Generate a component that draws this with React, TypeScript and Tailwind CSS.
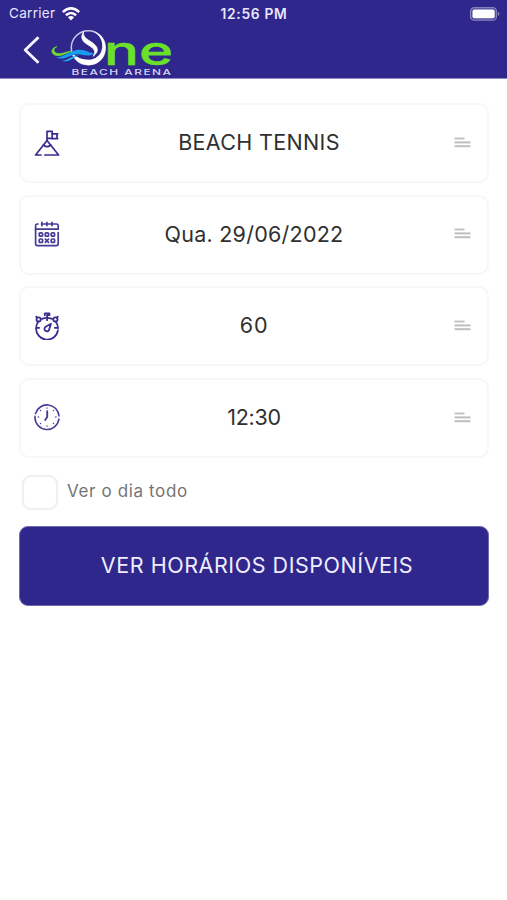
import type { ReactNode } from "react";

const iconClass = "mb-[1px] h-[28px] w-[28px] shrink-0";

function PeakIcon() {
  return (
    <svg viewBox="0 0 28 28" className={iconClass} fill="none" stroke="#382d91" strokeWidth="1.7" strokeLinecap="round" strokeLinejoin="round">
      <path d="M8 26H2.6L14 11.5 25.6 26H11.8" />
      <path d="M14 11.5V2.3h5.2v7H14" />
      <path d="M19.2 4.8h5.4l-.8 2.5.8 2.4h-5.4" />
      <path d="M10.4 16Q14.1 19.4 17.8 16" />
    </svg>
  );
}

function CalendarIcon() {
  return (
    <svg viewBox="0 0 28 28" className={iconClass} fill="none" stroke="#443a98" strokeWidth="1.7" strokeLinecap="round" strokeLinejoin="round">
      <path d="M5 4H4.3Q2.6 4 2.6 5.7V23.8Q2.6 25.7 4.5 25.7H23.3Q25.2 25.7 25.2 23.8V12.5" />
      <path d="M2.6 9.2H25.2V5.7Q25.2 4 23.5 4H8.5M8.9 2.4v3.2M13.9 2.4v3.2M19 2.4v3.2" />
      <rect x="6.2" y="12.8" width="3.4" height="3.4" rx="1" />
      <rect x="12.2" y="12.8" width="3.4" height="3.4" rx="1" />
      <rect x="18.2" y="12.8" width="3.4" height="3.4" rx="1" />
      <rect x="6.2" y="19" width="3.4" height="3.4" rx="1" />
      <path d="M12.3 19.1l3.2 3.2M15.5 19.1l-3.2 3.2" />
      <rect x="18.2" y="19" width="3.4" height="3.4" rx="1" />
    </svg>
  );
}

function StopwatchIcon() {
  return (
    <svg viewBox="0 0 28 28" className={iconClass} fill="none" stroke="#382d91" strokeWidth="1.8" strokeLinecap="round" strokeLinejoin="round">
      <path d="M24.9 18.6A11 11 0 0 1 3.1 16Q3.1 12.6 5.2 9.8M9 6.9Q14 4.7 19 6.9M22.8 9.8Q25.2 12.9 25 16.5" />
      <path d="M11.8 3.2V1.4H16.4V3.2H14.1V8.2" />
      <circle cx="5.6" cy="7.4" r="2.1" />
      <circle cx="22.4" cy="7.4" r="2.1" />
      <path d="M3.2 4.6l1 1M24.8 4.6l-1 1" />
      <path d="M18 11.8l-5.3 3a2.4 2.4 0 1 0 3.3 3.2zM4 15.8h2.2M21.8 15.8h2.2" />
    </svg>
  );
}

function ClockIcon() {
  return (
    <svg viewBox="0 0 28 28" className={iconClass} fill="none" stroke="#443a98" strokeWidth="1.6" strokeLinecap="round">
      <path d="M2.5 9.6A12 12 0 0 1 26 12M25.9 15A12 12 0 0 1 2 13.2V12.4" />
      <path d="M14.2 7.2v5.8l-2 3" strokeWidth="1.9" />
      <path d="M14 3.8v.4M14 21.8v.4M4.9 13h1M22.3 13h1M7.4 6.4l.3.3M20.3 6.6l.3-.3M7.4 19.6l.3-.3M20.3 19.3l.3.3" strokeWidth="1.2" />
    </svg>
  );
}

function Logo() {
  return (
    <svg viewBox="0 0 124 50" className="h-[50px] w-[124px] overflow-visible">
      <circle cx="37.3" cy="20.7" r="17" fill="none" stroke="#c9c7e8" strokeWidth="1.5" />
      <path d="M22 27Q25.5 38.2 37.5 38.2C48 38.2 54.6 30 54.4 20.5C54.2 12.5 49.6 6.3 42.6 4.5C49 8.5 51.7 13.5 51.2 20.5Q50.2 30 40.5 32.5Q29 33.5 22 27Z" fill="#fff" />
      <path d="M32.5 5C29 10.5 31.2 14.5 37 17.8C43.6 21.6 45.4 24.8 42 29.3C48.7 24.5 47 19.5 41 15.5C35.5 11.8 31.8 9.8 32.5 5Z" fill="#fff" stroke="#fff" strokeWidth="0.8" />
      <path d="M6 19.6C-1 21 -.5 28 6 28.6C11.5 29 15.6 25.8 20.5 24C14 25 11 27.2 7 26.6C2.2 25.8 1.6 21.6 6 19.6Z" fill="#72dc31" stroke="#72dc31" strokeWidth="0.7" />
      <path d="M5.5 30.4C13 30.4 19.3 22.8 28.8 22.8C36.3 22.8 37.7 26.9 44.3 25.7C37 30.9 32.7 27.2 26.8 27.2C18.4 27.2 13.5 34.4 5.5 30.4Z" fill="#189cf0" />
      <path d="M11 33.8C18.5 32.8 20.6 28.2 27.8 28.4C20.8 30.6 18 36 11 33.8Z" fill="#20b9ef" />
      <text x="53" y="37.6" textLength="69" lengthAdjust="spacingAndGlyphs" fill="#6be028" stroke="#6be028" strokeWidth="0.4" fontFamily="Inter, sans-serif" fontWeight="500" fontSize="39">ne</text>
      <text x="20.5" y="48" textLength="101" lengthAdjust="spacingAndGlyphs" fill="#d7d4f4" fontFamily="Inter, sans-serif" fontWeight="500" fontSize="8" letterSpacing="1">BEACH ARENA</text>
    </svg>
  );
}

function LinesIcon() {
  return (
    <svg viewBox="0 0 17 11" className="mb-[2px] h-[11px] w-[17px] shrink-0" fill="#bfbfbf">
      <rect x="0.5" y="0.6" width="10" height="1.8" />
      <rect x="0.5" y="4.4" width="16" height="2" />
      <rect x="0.5" y="8.2" width="16" height="2" />
    </svg>
  );
}

function Field({ icon, children }: { icon: ReactNode; children: ReactNode }) {
  return (
    <button className="flex h-[80px] w-full items-center rounded-[10px] border-2 border-[#f7f7f7] bg-white pr-[16px] pl-[12px] text-[#303030]">
      {icon}
      <span className="flex-1 pb-[2px] pl-[3px] text-center whitespace-nowrap">{children}</span>
      <LinesIcon />
    </button>
  );
}

export default function App() {
  return (
    <div className="h-[900px] w-[507px] overflow-hidden bg-white font-['Inter','Liberation_Sans',sans-serif]">
      <header className="h-[79px] border-b border-[#8f8bc7] bg-[#2f278c] text-[#e8e6fa]">
        <div className="grid h-[27px] grid-cols-3 items-center pr-[7px] pl-[9px] text-[13px]">
          <div className="flex items-center gap-[6px]">
            <span className="w-[47px] text-[13.5px] tracking-[0.3px] whitespace-nowrap">Carrier</span>
            <svg viewBox="0 0 18 14" className="h-[14px] w-[18px]" fill="none" stroke="#fff" strokeWidth="2.5">
              <path d="M.8 5.1Q9-2.3 17.2 5.1M3.9 8.3Q9 3.8 14.1 8.3" />
              <path d="M5.9 10.2Q9 7.7 12.1 10.2L9 13.4Z" fill="#fff" stroke="none" />
            </svg>
          </div>
          <span className="pt-[1px] pr-[1px] text-center text-[13.8px] font-semibold tracking-[0.7px] whitespace-nowrap">12:56 PM</span>
          <svg viewBox="0 0 31 14" className="h-[14px] w-[31px] justify-self-end">
            <rect x="1.5" y=".6" width="26" height="12.6" rx="3.8" fill="#514aa1" stroke="#8580be" strokeWidth="1.2" />
            <rect x="3.5" y="2.5" width="22.2" height="8.8" rx="2" fill="#fff" />
            <path d="M28.9 4.7Q32.1 6.9 28.9 9.1Z" fill="#8580be" />
          </svg>
        </div>
        <div className="flex h-[51px] items-start pl-[22px]">
          <svg viewBox="0 0 20 30" className="mt-[8px] h-[30px] w-[20px]" fill="none" stroke="#f5f4ff" strokeWidth="2.9" strokeLinejoin="round">
            <path d="M16.5 2.3L3.2 15 16.5 27.7" />
          </svg>
          <div className="ml-[9px]"><Logo /></div>
        </div>
      </header>
      <main className="pt-[24px] pr-[18px] pl-[19px]">
        <div className="flex flex-col gap-[11.7px] text-[21.5px]">
          <Field icon={<PeakIcon />}><span className="tracking-[0.33px]">BEACH TENNIS</span></Field>
          <Field icon={<CalendarIcon />}><span className="pr-[10px] tracking-[0.25px]">Qua. 29/06/2022</span></Field>
          <Field icon={<StopwatchIcon />}><span className="pr-[10px] tracking-[0.8px]">60</span></Field>
          <Field icon={<ClockIcon />}><span className="pr-[10px] tracking-[-0.3px]">12:30</span></Field>
        </div>
        <label className="mt-[16px] ml-[3px] flex h-[36px] items-center gap-[9px] text-[17px] text-[#757575]">
          <input type="checkbox" className="h-[35px] w-[36px] appearance-none rounded-[9px] border-2 border-[#efefef] bg-white" />
          <span className="tracking-[0.63px]">Ver o dia todo</span>
        </label>
        <button className="mt-[16px] flex h-[80px] w-full items-center justify-center rounded-[9px] border border-[#6f69b0] bg-[#2f278c] pb-[2px] pl-[6px] text-[21.5px] font-normal text-[#f0edff]">
          <span className="tracking-[0.55px] whitespace-nowrap">VER HORÁRIOS DISPONÍVEIS</span>
        </button>
      </main>
    </div>
  );
}
